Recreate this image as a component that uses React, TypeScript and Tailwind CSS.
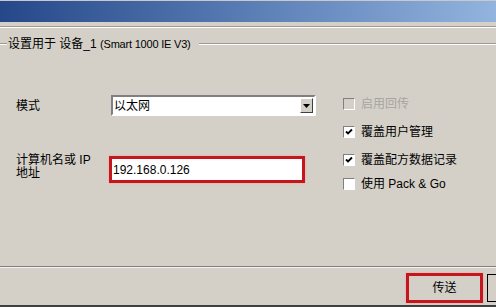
const cjk = "font-['Liberation_Sans','Noto_Sans_CJK_SC',sans-serif]";

function Etched({ className = "" }: { className?: string }) {
  return <div className={`h-[2px] border-t border-[#9c9a94] border-b border-b-white ${className}`} />;
}

function Check({ checked, disabled, label }: { checked?: boolean; disabled?: boolean; label: string }) {
  return (
    <div className="flex items-center h-[12px]">
      <div
        className={`w-[12px] h-[12px] border border-t-[#808080] border-l-[#808080] border-r-white border-b-white ${
          disabled ? "bg-[#d4d0c8]" : "bg-white"
        } flex items-center justify-center`}
      >
        {checked && (
          <svg width="8" height="8" viewBox="0 0 8 8">
            <path d="M1 3.5 L3 5.5 L7 1.5" stroke="#000" strokeWidth="1.8" fill="none" />
          </svg>
        )}
      </div>
      <span
        className={`ml-[6px] text-[12px] leading-[14px] whitespace-nowrap ${
          disabled ? "text-[#a8a5a0]" : "text-black"
        }`}
      >
        {label}
      </span>
    </div>
  );
}

export default function App() {
  return (
    <div className={`w-[496px] h-[307px] bg-[#d4d0c8] flex flex-col overflow-hidden text-[12px] text-black ${cjk}`}>
      <div className="h-[1px] bg-[#c9c9c9]" />
      <div className="h-[21px] bg-gradient-to-r from-[#26488a] via-[#5a7db5] to-[#92b4de]" />
      <div className="h-[4px]" />
      <Etched />

      {/* group header */}
      <div className="mt-[9px] h-[14px] flex items-center">
        <Etched className="w-[7px]" />
        <span className="px-[1px] leading-[14px] whitespace-nowrap">
          设置用于 设备_1 <span className="text-[11px] tracking-[-0.2px]">(Smart 1000 IE V3)</span>
        </span>
        <Etched className="flex-1 ml-[7px]" />
      </div>

      <div className="h-[215px] flex">
        <div className="w-[326px] pl-[16px] flex flex-col">
          <div className="mt-[44px] flex items-center h-[21px]">
            <span className="w-[95px] leading-[14px]">模式</span>
            <div className="w-[205px] h-[21px] border-2 border-t-[#808080] border-l-[#808080] border-r-white border-b-white bg-white flex items-center">
              <span className="flex-1 pl-[1px] leading-[14px]">以太网</span>
              <div className="w-[13px] h-[15px] mr-[1px] bg-[#d4d0c8] border border-t-white border-l-white border-r-[#404040] border-b-[#404040] flex items-center justify-center">
                <svg width="7" height="4" viewBox="0 0 7 4">
                  <path d="M0 0 H7 L3.5 4 Z" fill="#000" />
                </svg>
              </div>
            </div>
          </div>

          <div className="mt-[38px] flex items-start">
            <div className="w-[93px] flex flex-col">
              <span className="leading-[13px] whitespace-nowrap">计算机名或 IP</span>
              <span className="leading-[13px]">地址</span>
            </div>
            <div className="mt-[2px] w-[196px] h-[27px] border-[3px] border-[#c4161c] shadow-[0_0_2px_#f3a0a0] bg-white flex items-center">
              <span className="pl-[1px] leading-[14px]">192.168.0.126</span>
            </div>
          </div>
        </div>

        <div className="pl-[17px] flex flex-col">
          <div className="mt-[47px]">
            <Check disabled label="启用回传" />
          </div>
          <div className="mt-[16px]">
            <Check checked label="覆盖用户管理" />
          </div>
          <div className="mt-[16px]">
            <Check checked label="覆盖配方数据记录" />
          </div>
          <div className="mt-[12px]">
            <Check label="使用  Pack & Go" />
          </div>
        </div>
      </div>

      <div className="h-[1px] bg-[#808080]" />
      <div className="h-[1px] bg-[#f4f3f0]" />

      <div className="flex-1 flex items-start">
        <div className="ml-[406px] mt-[5px] w-[77px] h-[30px] border-[3px] border-[#c4161c] shadow-[0_0_2px_#f3a0a0] bg-[#d4d0c8] flex items-center justify-center">
          <span className="leading-[14px]">传送</span>
        </div>
        <div className="ml-[4px] mt-[6px] flex-1 h-[28px] border border-r-0 border-black bg-[#d4d0c8]" />
      </div>
      <div className="h-[2px] bg-[#404040]" />
    </div>
  );
}
